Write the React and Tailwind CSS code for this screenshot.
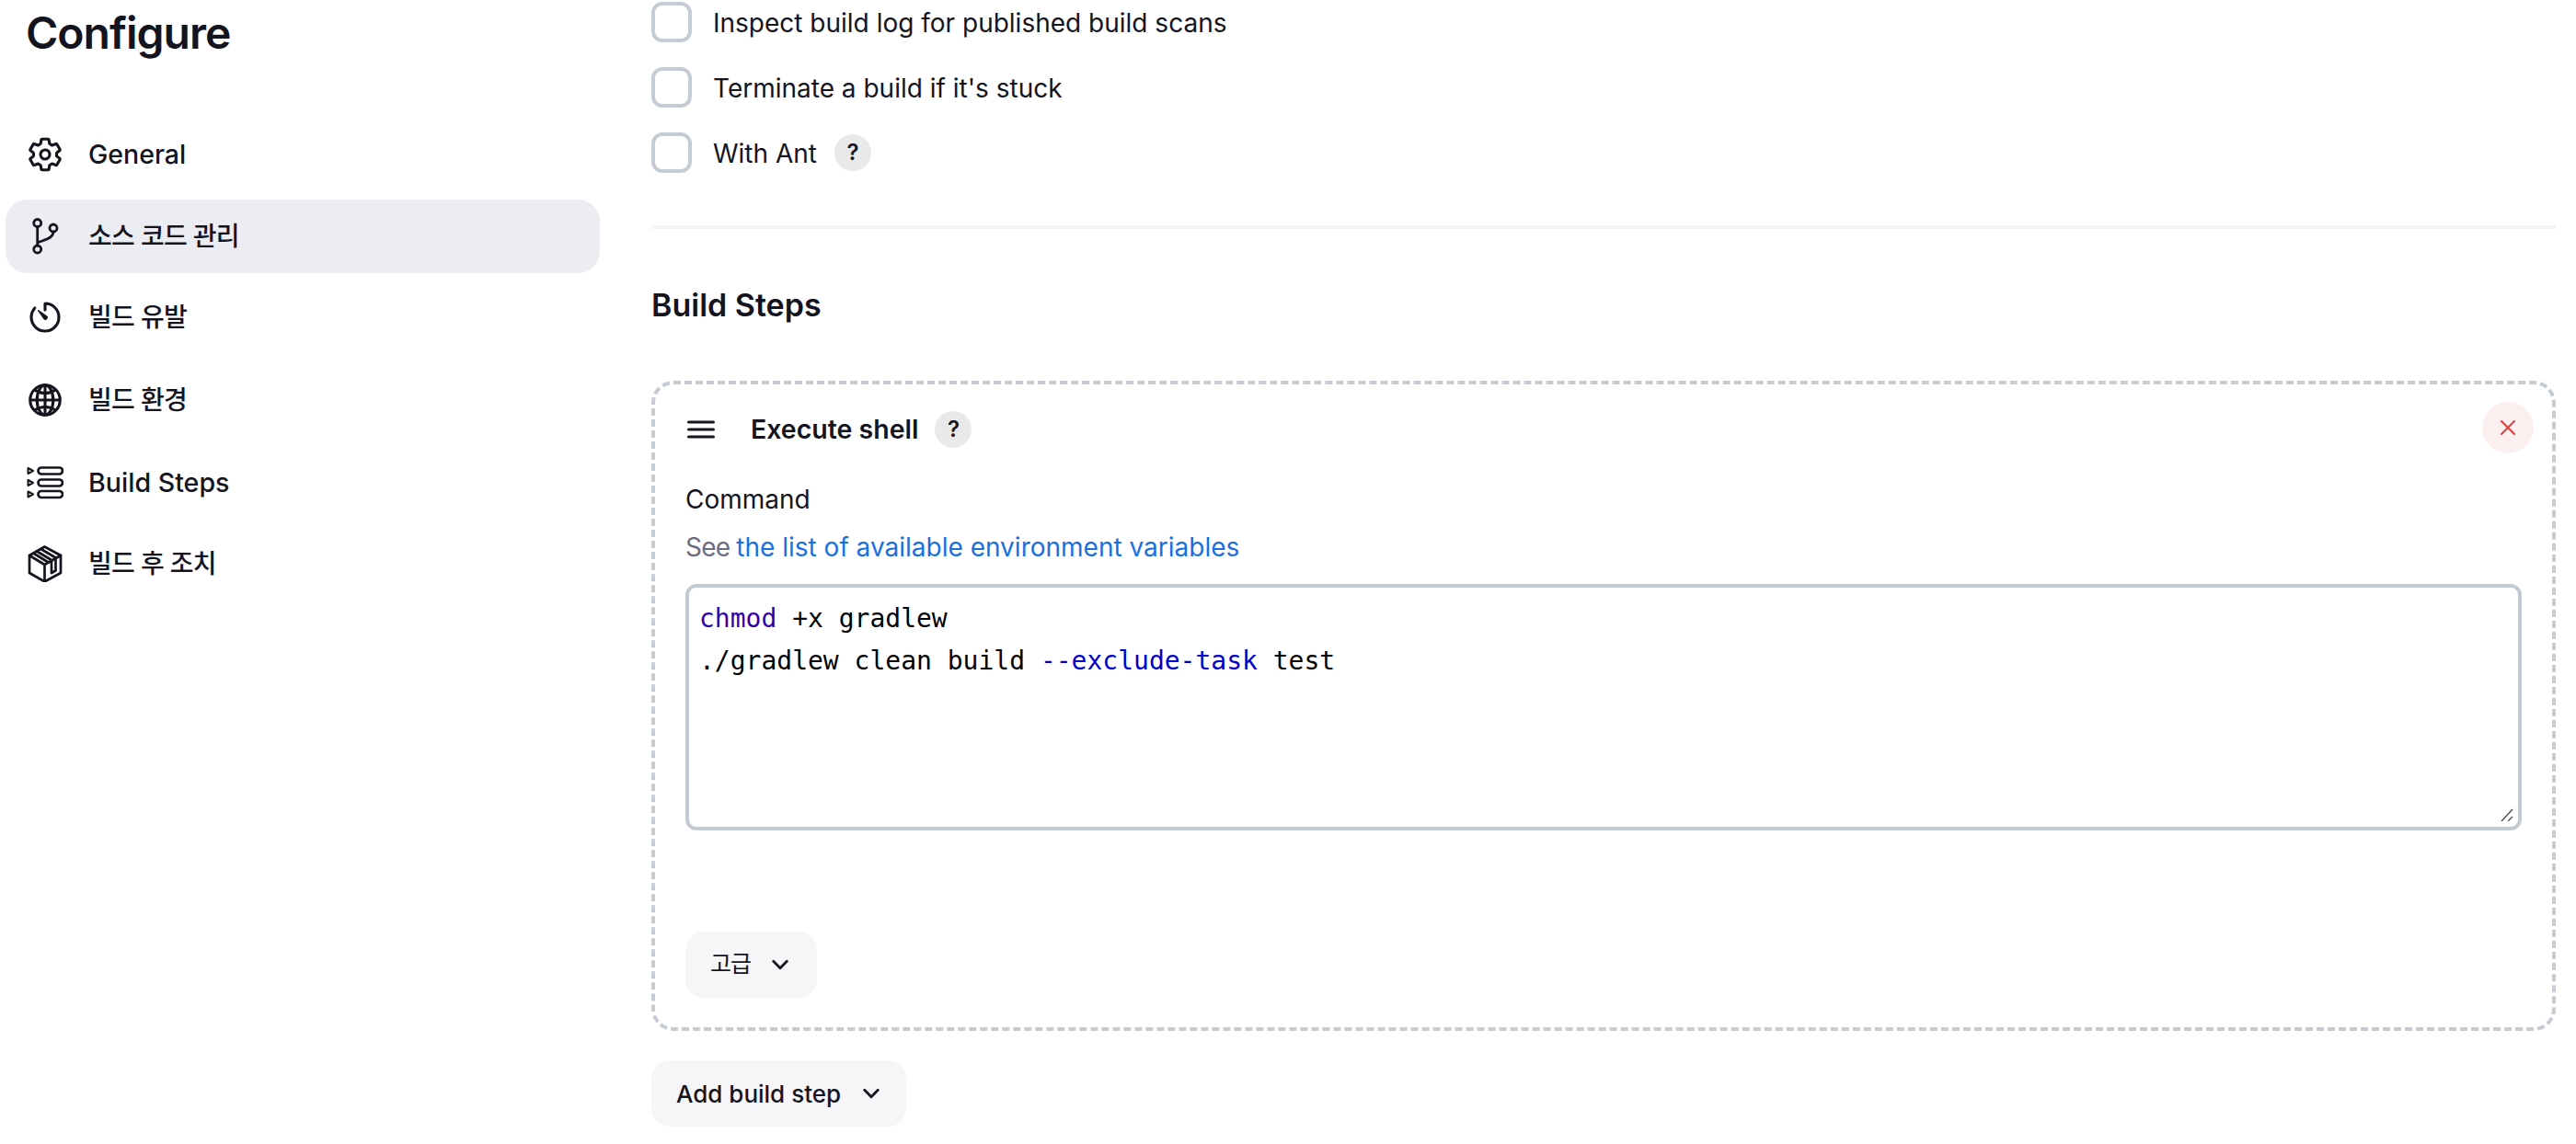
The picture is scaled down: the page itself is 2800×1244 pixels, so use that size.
import React from "react";
import { IoSettingsOutline, IoTimerOutline, IoGlobeOutline, IoCloseOutline, IoChevronDownOutline } from "react-icons/io5";

const BranchIcon = (p) => (
  <svg viewBox="0 0 40 40" fill="none" stroke="currentColor" strokeWidth="2.8" strokeLinecap="round" {...p}>
    <circle cx="11.7" cy="5.5" r="4" />
    <circle cx="29" cy="11" r="4" />
    <circle cx="11.7" cy="34" r="4" />
    <path d="M11.7 9.5V30M29 15C29 22 20 23.5 11.7 27" />
  </svg>
);
const StepsIcon = (p) => (
  <svg viewBox="0 0 40 40" fill="none" stroke="currentColor" strokeWidth="2.7" strokeLinejoin="round" {...p}>
    <rect x="12.5" y="3.5" width="26.5" height="7" rx="3.5" />
    <rect x="12.5" y="16.5" width="26.5" height="7" rx="3.5" />
    <rect x="12.5" y="29" width="26.5" height="7" rx="3.5" />
    <path d="M1.5 4 7 7 1.5 10Z M1.5 17 7 20 1.5 23Z M1.5 29.5 7 32.5 1.5 35.5Z" strokeWidth="2" />
  </svg>
);
const PackageIcon = (p) => (
  <svg viewBox="0 0 40 40" fill="none" stroke="currentColor" strokeWidth="2.7" strokeLinejoin="round" strokeLinecap="round" {...p}>
    <path d="M19.5 1.5 37 11V30L19.5 39.5 3 30V11Z" />
    <path d="M3 11 19.5 21 37 11M19.5 21V39.5" />
    <path d="M11 6.5 27 16V26M15.5 4 31.5 13.5V27.5L27 30V26" />
    <path d="M8 9 23.5 18.5" />
  </svg>
);

const thick = "[&_*]:[stroke-width:40px]";
const nav = [
  { label: "General", Icon: IoSettingsOutline, icon: thick, cls: "mt-0 text-[28.5px]" },
  { label: "소스 코드 관리", Icon: BranchIcon, icon: "", cls: "mt-[9px] text-[28px] tracking-[-0.7px]", active: true },
  { label: "빌드 유발", Icon: IoTimerOutline, icon: "[&_path:first-child]:[stroke-width:40px]", cls: "mt-[8px] text-[28px] tracking-[-0.7px]" },
  { label: "빌드 환경", Icon: IoGlobeOutline, icon: thick, cls: "mt-[10px] text-[28px] tracking-[-0.7px]" },
  { label: "Build Steps", Icon: StepsIcon, icon: "", cls: "mt-[10px] text-[28.6px]" },
  { label: "빌드 후 조치", Icon: PackageIcon, icon: "", cls: "mt-[8px] text-[28px] tracking-[-0.7px]" },
];

const Help = () => (
  <span className="flex h-10 w-10 shrink-0 items-center justify-center rounded-full bg-[#e9e9ea] text-[24px] font-semibold text-[#14141f]">?</span>
);

const Check = ({ children, help }) => (
  <div className="flex h-[44px] items-center">
    <span className="h-[44px] w-[44px] shrink-0 rounded-[12px] border-[4px] border-[#c6ccd3] bg-white" />
    <span className="ml-[23px] pt-[2px] text-[28px] leading-[44px]">{children}</span>
    {help && <span className="ml-[19px]"><Help /></span>}
  </div>
);

const Chevron = ({ className }) => (
  <IoChevronDownOutline className={`${className} [&_*]:[stroke-width:56px]`} />
);

export default function App() {
  return (
    <div className="flex h-[1244px] w-[2800px] overflow-hidden bg-white text-[#14141f] [font-family:Inter,'Noto_Sans_CJK_KR',sans-serif]">
      <aside className="ml-[6px] w-[646px] shrink-0">
        <h1 className="ml-[22px] mt-[8px] text-[48px] font-semibold leading-[56px] tracking-[-1px]">Configure</h1>
        <nav className="mt-[64px] flex flex-col">
          {nav.map(({ label, Icon, icon, cls, active }) => (
            <div key={label} className={`flex h-[80px] items-center rounded-[24px] pl-[23px] ${cls} ${active ? "bg-[#ecedf3]" : ""}`}>
              <Icon className={`h-[40px] w-[40px] shrink-0 ${icon}`} />
              <span className="ml-[27px] font-[450]">{label}</span>
            </div>
          ))}
        </nav>
      </aside>
      <main className="ml-[56px] w-[2070px] shrink-0">
        <div className="mt-[2px] flex flex-col gap-[27px]">
          <Check>Inspect build log for published build scans</Check>
          <Check>Terminate a build if it's stuck</Check>
          <Check help>With Ant</Check>
        </div>
        <div className="mt-[57px] h-[4px] bg-[#f3f4f7]" />
        <h2 className="mt-[61px] text-[34px] font-semibold leading-[44px]">Build Steps</h2>
        <section className="relative mt-[60px] h-[707px] rounded-[24px] border-[4px] border-dashed border-[#c6ccd3] px-[33px] pt-[29px]">
          <div className="flex h-[40px] items-center">
            <svg viewBox="0 0 30 20" className="ml-[2px] h-[20px] w-[30px]" fill="none" stroke="currentColor" strokeWidth="3" strokeLinecap="round">
              <path d="M1.5 2h27M1.5 10h27M1.5 18h27" />
            </svg>
            <span className="ml-[39px] text-[28.5px] font-semibold">Execute shell</span>
            <span className="ml-[18px]"><Help /></span>
          </div>
          <button className="absolute right-[20px] top-[19px] flex h-[56px] w-[56px] items-center justify-center rounded-full bg-[#fbf0ef] text-[#e0403a]">
            <IoCloseOutline className="h-[32px] w-[32px]" />
          </button>
          <div className="mt-[36px] text-[28px] leading-[40px]">Command</div>
          <div className="mt-[12px] text-[28px] leading-[40px] text-[#6d6b7f]">
            <span className="tracking-[-0.8px]">See </span><span className="text-[#1a6fe0]">the list of available environment variables</span>
          </div>
          <div className="relative mt-[20px] h-[268px] overflow-hidden rounded-[12px] border-[4px] border-[#c3cad1] pl-[11px] pt-[11px] [font-family:'DejaVu_Sans_Mono',monospace] text-[28px] leading-[46px] text-black">
            <div><span className="text-[#3300aa]">chmod</span> +x gradlew</div>
            <div>./gradlew clean build <span className="text-[#0000cc]">--exclude-task</span> test</div>
            <svg viewBox="0 0 14 14" className="absolute bottom-[6px] right-[5px] h-[14px] w-[14px]" fill="none" stroke="#4d4d4d" strokeWidth="1.4">
              <path d="M1 14 13 1M8 14 13 9" />
            </svg>
          </div>
          <button className="mt-[110px] flex h-[72px] w-[143px] items-center rounded-[20px] bg-[#f6f6f8] pl-[27px] text-[25px] tracking-[-1px]">
            고급
            <Chevron className="ml-[19px] h-[26px] w-[26px]" />
          </button>
        </section>
        <button className="mt-[32px] flex h-[72px] w-[277px] items-center rounded-[20px] bg-[#f6f6f8] pl-[27px] text-[26px] font-[450]">
          Add build step
          <Chevron className="ml-[20px] h-[26px] w-[26px]" />
        </button>
      </main>
    </div>
  );
}
